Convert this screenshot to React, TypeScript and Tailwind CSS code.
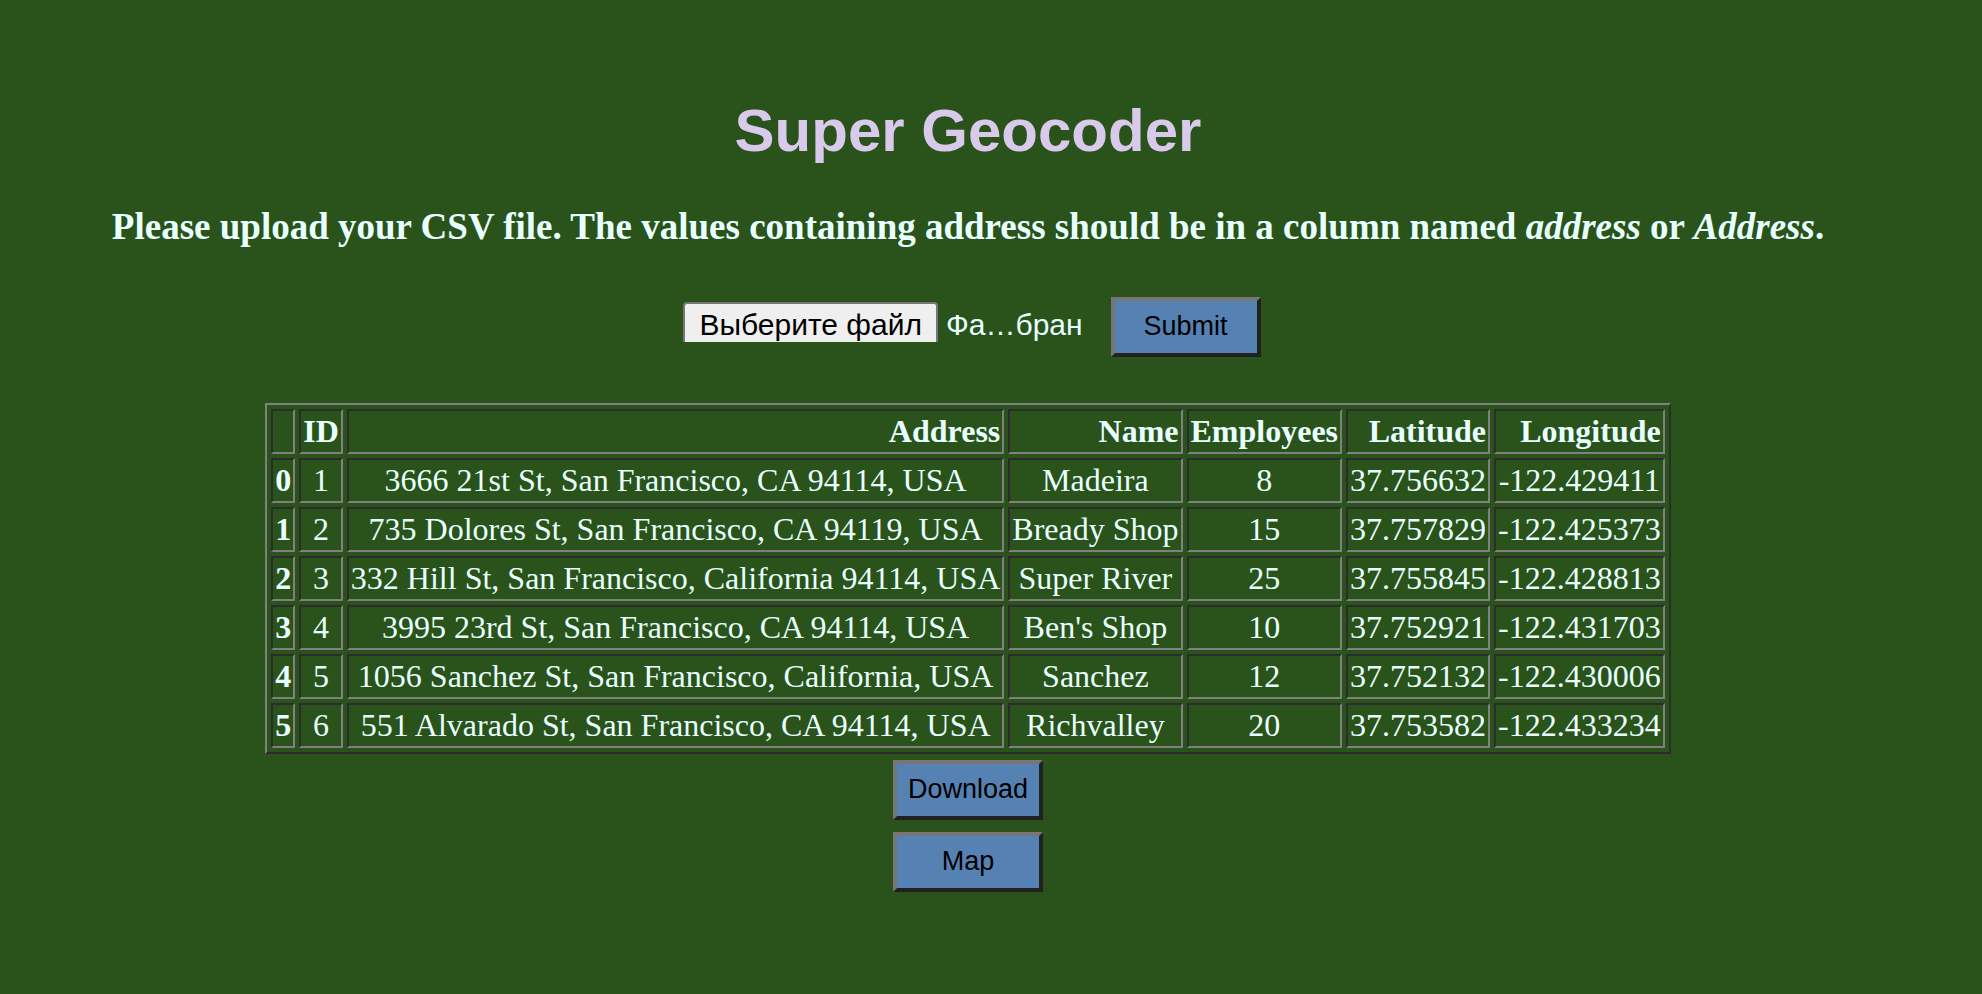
import type { ReactNode } from "react";

const columns = ["ID", "Address", "Name", "Employees", "Latitude", "Longitude"];

const rows = [
  ["1", "3666 21st St, San Francisco, CA 94114, USA", "Madeira", "8", "37.756632", "-122.429411"],
  ["2", "735 Dolores St, San Francisco, CA 94119, USA", "Bready Shop", "15", "37.757829", "-122.425373"],
  ["3", "332 Hill St, San Francisco, California 94114, USA", "Super River", "25", "37.755845", "-122.428813"],
  ["4", "3995 23rd St, San Francisco, CA 94114, USA", "Ben's Shop", "10", "37.752921", "-122.431703"],
  ["5", "1056 Sanchez St, San Francisco, California, USA", "Sanchez", "12", "37.752132", "-122.430006"],
  ["6", "551 Alvarado St, San Francisco, CA 94114, USA", "Richvalley", "20", "37.753582", "-122.433234"],
];

const cell =
  "border-2 border-t-[#2c2c2c] border-l-[#2c2c2c] border-r-[#808080] border-b-[#808080] p-[2px]";

function ActionButton({ children, type = "button" }: { children: ReactNode; type?: "button" | "submit" }) {
  return (
    <button
      type={type}
      className="h-[60px] w-[150px] cursor-pointer border-4 border-t-[#767676] border-r-[#212121] border-b-[#212121] border-l-[#767676] bg-[#5682b3] pb-[2px] text-center font-['Liberation_Sans',Arial,sans-serif] text-[27px] leading-[30px] text-black"
    >
      {children}
    </button>
  );
}

function FilePicker() {
  return (
    <label
      htmlFor="csv"
      className="relative flex h-[40px] cursor-pointer items-start gap-2 overflow-hidden font-['Liberation_Sans',Arial,sans-serif] text-[30px] leading-[34px] whitespace-nowrap"
    >
      <input id="csv" type="file" accept=".csv" className="sr-only" />
      <span className="h-[48px] rounded-[4px] border-2 border-[#767676] bg-[#efefef] px-[14px] pt-1 text-black">
        Выберите файл
      </span>
      <span className="pt-[6px]">Фа…бран</span>
    </label>
  );
}

export default function App() {
  return (
    <main className="flex min-h-screen flex-col items-center bg-[#2a531b] pt-[97px] pr-[46px] pb-24 font-['Liberation_Serif','Times_New_Roman',serif] text-[#e9ffff]">
      <h1 className="font-['Liberation_Sans',Arial,sans-serif] text-[60px] leading-[68px] font-bold text-[#d9caeb]">
        Super Geocoder
      </h1>
      <h3 className="mt-[41px] text-center text-[37px] leading-[42px] font-bold">
        Please upload your CSV file. The values containing address should be in a column named{" "}
        <em>address</em> or <em>Address</em>.
      </h3>

      <form className="mt-[49px] flex items-start gap-7 pl-2" onSubmit={(e) => e.preventDefault()}>
        <div className="pt-[5px]">
          <FilePicker />
        </div>
        <ActionButton type="submit">Submit</ActionButton>
      </form>

      <table className="mt-[46px] border-separate border-spacing-[4px] border-2 border-t-[#808080] border-r-[#2c2c2c] border-b-[#2c2c2c] border-l-[#808080] text-center text-[32px] leading-[37px] whitespace-nowrap">
        <thead>
          <tr className="text-right">
            <th className={cell} />
            {columns.map((name) => (
              <th key={name} scope="col" className={cell}>
                {name}
              </th>
            ))}
          </tr>
        </thead>
        <tbody>
          {rows.map((row, index) => (
            <tr key={row[0]}>
              <th scope="row" className={cell}>
                {index}
              </th>
              {row.map((value, i) => (
                <td key={columns[i]} className={cell}>
                  {value}
                </td>
              ))}
            </tr>
          ))}
        </tbody>
      </table>

      <div className="mt-[6px] flex flex-col gap-3">
        <ActionButton>Download</ActionButton>
        <ActionButton>Map</ActionButton>
      </div>
    </main>
  );
}
